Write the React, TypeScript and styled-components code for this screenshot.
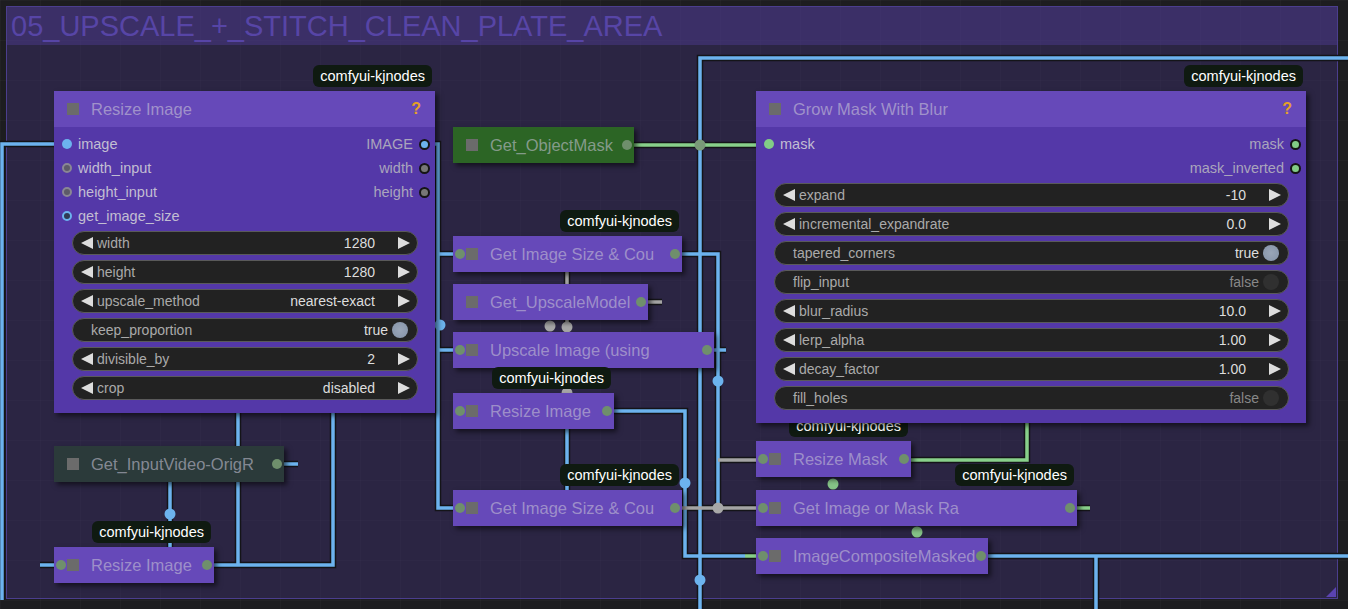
import React from "react";
import styled, { createGlobalStyle } from "styled-components";

const GlobalStyle = createGlobalStyle`
  html, body {
    margin: 0;
    padding: 0;
    background: #1d1d20;
    overflow: hidden;
  }
  body {
    font-family: "Liberation Sans", Arial, sans-serif;
  }
`;

const Canvas = styled.div`
  position: relative;
  width: 1348px;
  height: 609px;
  overflow: hidden;
  background-color: #1d1d20;
  background-image: linear-gradient(rgba(255, 255, 255, 0.025) 1px, transparent 1px),
    linear-gradient(90deg, rgba(255, 255, 255, 0.025) 1px, transparent 1px);
  background-size: 40px 40px;
`;

const Group = styled.div`
  position: absolute;
  left: 6px;
  top: 6px;
  width: 1330px;
  height: 591px;
  border: 1.5px solid #4b3e8e;
  background: rgba(62, 48, 110, 0.45);
  display: flex;
  flex-direction: column;
`;

const GroupHeader = styled.div`
  height: 38px;
  background: rgba(75, 58, 140, 0.5);
  color: #5745a6;
  font-size: 29px;
  line-height: 38px;
  padding-left: 4px;
  white-space: nowrap;
`;

const GroupResize = styled.div`
  position: absolute;
  right: 1px;
  bottom: 1px;
  width: 0;
  height: 0;
  border-left: 10px solid transparent;
  border-bottom: 10px solid #5a43b0;
`;

const Wires = styled.svg`
  position: absolute;
  left: 0;
  top: 0;
  width: 1348px;
  height: 609px;
  pointer-events: none;
`;

const NodeBox = styled.div<{ $x: number; $y: number; $w: number; $h: number; $bg: string }>`
  position: absolute;
  left: ${(p) => p.$x}px;
  top: ${(p) => p.$y}px;
  width: ${(p) => p.$w}px;
  height: ${(p) => p.$h}px;
  background: ${(p) => p.$bg};
  box-shadow: 3px 3px 5px rgba(0, 0, 0, 0.55);
  display: flex;
  flex-direction: column;
`;

const TitleBar = styled.div<{ $bg: string }>`
  height: 36px;
  flex: none;
  background: ${(p) => p.$bg};
  display: flex;
  align-items: center;
  padding: 0 14px 0 13px;
  gap: 12px;
  color: rgba(200, 196, 215, 0.6);
  font-size: 16.5px;
  white-space: nowrap;
  overflow: hidden;
`;

const CollapseBox = styled.span`
  width: 12px;
  height: 12px;
  flex: none;
  background: #6b6b6b;
`;

const TitleText = styled.span`
  flex: 1;
`;

const Help = styled.span`
  color: #e3a126;
  font-weight: bold;
  font-size: 16px;
`;

const Body = styled.div`
  flex: 1;
  padding: 5px 17px 0 8px;
  display: flex;
  flex-direction: column;
`;

const SlotRow = styled.div`
  height: 24px;
  display: flex;
  align-items: center;
  justify-content: space-between;
  font-size: 14.5px;
`;

const SlotSide = styled.div<{ $out?: boolean }>`
  display: flex;
  align-items: center;
  gap: 6px;
  flex-direction: ${(p) => (p.$out ? "row-reverse" : "row")};
  margin-right: ${(p) => (p.$out ? "-12px" : "0")};
  color: ${(p) => (p.$out ? "#aaa5bc" : "#c2bed2")};
`;

type Dot = "blue" | "blueRing" | "greyRing" | "grey" | "green";

const dotFill: Record<Dot, string> = {
  blue: "#6cb3ee",
  blueRing: "#2f3a52",
  greyRing: "#5d5a68",
  grey: "#777",
  green: "#82cc86",
};

const dotEdge: Record<Dot, string> = {
  blue: "#6cb3ee",
  blueRing: "#6cb3ee",
  greyRing: "#8a8794",
  grey: "#151515",
  green: "#151515",
};

const SlotDot = styled.span<{ $kind: Dot; $out?: boolean }>`
  width: ${(p) => (p.$out ? 11 : 10)}px;
  height: ${(p) => (p.$out ? 11 : 10)}px;
  border-radius: 50%;
  box-sizing: border-box;
  background: ${(p) => dotFill[p.$kind]};
  border: ${(p) => (p.$out || p.$kind.includes("Ring") ? 2 : 0)}px solid
    ${(p) => (p.$out && p.$kind === "blue" ? "#151515" : dotEdge[p.$kind])};
`;

const Widgets = styled.div`
  margin: 3px 0 0 10px;
  display: flex;
  flex-direction: column;
  gap: 5px;
`;

const Widget = styled.div`
  height: 24px;
  box-sizing: border-box;
  border: 1px solid #5a5a5a;
  border-radius: 12px;
  background: #222;
  display: flex;
  align-items: center;
  padding: 0 7px 0 8px;
  font-size: 14px;
  color: #aaa;
  white-space: nowrap;
`;

const Arrow = styled.span<{ $right?: boolean }>`
  width: 0;
  height: 0;
  flex: none;
  border-top: 6px solid transparent;
  border-bottom: 6px solid transparent;
  ${(p) => (p.$right ? "border-left: 12px solid #ddd;" : "border-right: 12px solid #ddd;")}
`;

const WLabel = styled.span<{ $toggle?: boolean }>`
  flex: 1;
  margin-left: ${(p) => (p.$toggle ? 10 : 4)}px;
`;

const WValue = styled.span<{ $toggle?: boolean; $on?: boolean }>`
  color: ${(p) => (p.$toggle && !p.$on ? "#888" : "#ddd")};
  margin-right: ${(p) => (p.$toggle ? 4 : 23)}px;
`;

const Knob = styled.span<{ $on: boolean }>`
  width: 16px;
  height: 16px;
  border-radius: 50%;
  margin-right: 2px;
  background: ${(p) => (p.$on ? "radial-gradient(circle, #9aa6b8 0%, #8493a8 100%)" : "#303030")};
`;

const CollapsedBox = styled(NodeBox)`
  flex-direction: row;
  align-items: center;
  padding: 0 10px 0 13px;
  gap: 12px;
  box-sizing: border-box;
  color: rgba(200, 196, 215, 0.58);
  font-size: 16.5px;
  white-space: nowrap;
`;

const EdgeDot = styled.span<{ $side: "left" | "right" }>`
  position: absolute;
  top: 13px;
  ${(p) => p.$side}: 2px;
  width: 10px;
  height: 10px;
  border-radius: 50%;
  background: #6f8f6c;
`;

const Badge = styled.div`
  position: absolute;
  right: 3px;
  bottom: calc(100% + 4px);
  height: 22px;
  padding: 0 7px;
  border-radius: 6px;
  background: #0f1a11;
  color: #fff;
  font-size: 14.5px;
  line-height: 22px;
  white-space: nowrap;
`;

type WidgetDef = { label: string; value: string; toggle?: boolean; on?: boolean };
type SlotDef = { name: string; dot: Dot };

type FullNode = {
  title: string;
  x: number;
  y: number;
  w: number;
  h: number;
  inputs: SlotDef[];
  outputs: SlotDef[];
  widgets: WidgetDef[];
};

type MiniNode = {
  title: string;
  x: number;
  y: number;
  w: number;
  bg?: string;
  input?: boolean;
  badge?: boolean;
};

const PURPLE = "#6649b9";

const resizeNode: FullNode = {
  title: "Resize Image",
  x: 54,
  y: 91,
  w: 381,
  h: 322,
  inputs: [
    { name: "image", dot: "blue" },
    { name: "width_input", dot: "greyRing" },
    { name: "height_input", dot: "greyRing" },
    { name: "get_image_size", dot: "blueRing" },
  ],
  outputs: [
    { name: "IMAGE", dot: "blue" },
    { name: "width", dot: "grey" },
    { name: "height", dot: "grey" },
  ],
  widgets: [
    { label: "width", value: "1280" },
    { label: "height", value: "1280" },
    { label: "upscale_method", value: "nearest-exact" },
    { label: "keep_proportion", value: "true", toggle: true, on: true },
    { label: "divisible_by", value: "2" },
    { label: "crop", value: "disabled" },
  ],
};

const growNode: FullNode = {
  title: "Grow Mask With Blur",
  x: 756,
  y: 91,
  w: 550,
  h: 332,
  inputs: [{ name: "mask", dot: "green" }],
  outputs: [
    { name: "mask", dot: "green" },
    { name: "mask_inverted", dot: "green" },
  ],
  widgets: [
    { label: "expand", value: "-10" },
    { label: "incremental_expandrate", value: "0.0" },
    { label: "tapered_corners", value: "true", toggle: true, on: true },
    { label: "flip_input", value: "false", toggle: true },
    { label: "blur_radius", value: "10.0" },
    { label: "lerp_alpha", value: "1.00" },
    { label: "decay_factor", value: "1.00" },
    { label: "fill_holes", value: "false", toggle: true },
  ],
};

// collapsed nodes, listed in paint order
const miniNodes: MiniNode[] = [
  { title: "Get_ObjectMask", x: 453, y: 127, w: 181, bg: "#2c6525" },
  { title: "Get Image Size & Cou", x: 453, y: 236, w: 229, input: true, badge: true },
  { title: "Get_UpscaleModel", x: 453, y: 284, w: 195 },
  { title: "Upscale Image (using", x: 453, y: 332, w: 261, input: true },
  { title: "Resize Image", x: 453, y: 393, w: 161, input: true, badge: true },
  { title: "Get Image Size & Cou", x: 453, y: 490, w: 229, input: true, badge: true },
  { title: "Get_InputVideo-OrigR", x: 54, y: 446, w: 230, bg: "#2b3a3a" },
  { title: "Resize Image", x: 54, y: 547, w: 160, input: true, badge: true },
  { title: "Resize Mask", x: 756, y: 441, w: 155, input: true, badge: true },
  { title: "Get Image or Mask Ra", x: 756, y: 490, w: 321, input: true, badge: true },
  { title: "ImageCompositeMasked", x: 756, y: 538, w: 232, input: true },
];

const BLUE = "#6cb3ee";
const GREEN = "#88d08a";
const GREY = "#a4a4a4";

const links: { d: string; color: string }[] = [
  { d: "M2 600 V144 H60", color: BLUE },
  { d: "M430 144 H438 V508 H459 M438 254 H459 M438 350 H459", color: BLUE },
  { d: "M700 609 V58 H1348", color: BLUE },
  { d: "M682 254 H718 V508", color: BLUE },
  { d: "M714 350 H726", color: BLUE },
  { d: "M614 411 H685 V556 H745", color: BLUE },
  { d: "M745 556 H762", color: GREEN },
  { d: "M988 556 H1348 M1096 556 V609", color: BLUE },
  { d: "M567 429 V490", color: BLUE },
  { d: "M208 565 H333 V413 M238 565 V413", color: BLUE },
  { d: "M40 565 H60", color: BLUE },
  { d: "M278 464 H298", color: BLUE },
  { d: "M170 482 V547", color: BLUE },
  { d: "M628 145 H762", color: GREEN },
  { d: "M905 460 H1027 V423", color: GREEN },
  { d: "M1071 508 H1090", color: GREEN },
  { d: "M682 508 H762 M718 460 H762", color: GREY },
  { d: "M567 272 V332", color: GREY },
  { d: "M648 302 H662", color: GREY },
];

const joints: { x: number; y: number; color: string }[] = [
  { x: 440, y: 325, color: BLUE },
  { x: 700, y: 145, color: "#7a9a78" },
  { x: 700, y: 580, color: BLUE },
  { x: 718, y: 381, color: BLUE },
  { x: 685, y: 483, color: BLUE },
  { x: 718, y: 508, color: "#a8a8a8" },
  { x: 170, y: 514, color: BLUE },
  { x: 550, y: 326, color: "#a8a8a8" },
  { x: 567, y: 327, color: "#a8a8a8" },
  { x: 833, y: 484, color: "#86c488" },
  { x: 917, y: 532, color: "#86c488" },
  { x: 567, y: 393, color: "#a8a8a8" },
];

const NodeWidget = ({ w }: { w: WidgetDef }) => (
  <Widget>
    {!w.toggle && <Arrow />}
    <WLabel $toggle={w.toggle}>{w.label}</WLabel>
    <WValue $toggle={w.toggle} $on={w.on}>
      {w.value}
    </WValue>
    {w.toggle ? <Knob $on={!!w.on} /> : <Arrow $right />}
  </Widget>
);

const FullNodeView = ({ node }: { node: FullNode }) => {
  const rows = Math.max(node.inputs.length, node.outputs.length);
  return (
    <NodeBox $x={node.x} $y={node.y} $w={node.w} $h={node.h} $bg="#5438a8">
      <Badge>comfyui-kjnodes</Badge>
      <TitleBar $bg={PURPLE}>
        <CollapseBox />
        <TitleText>{node.title}</TitleText>
        <Help>?</Help>
      </TitleBar>
      <Body>
        {Array.from({ length: rows }).map((_, i) => {
          const a = node.inputs[i];
          const b = node.outputs[i];
          return (
            <SlotRow key={i}>
              <SlotSide>
                {a && <SlotDot $kind={a.dot} />}
                {a && a.name}
              </SlotSide>
              <SlotSide $out>
                {b && <SlotDot $kind={b.dot} $out />}
                {b && b.name}
              </SlotSide>
            </SlotRow>
          );
        })}
        <Widgets>
          {node.widgets.map((w) => (
            <NodeWidget key={w.label} w={w} />
          ))}
        </Widgets>
      </Body>
    </NodeBox>
  );
};

const MiniNodeView = ({ node }: { node: MiniNode }) => (
  <CollapsedBox $x={node.x} $y={node.y} $w={node.w} $h={36} $bg={node.bg || PURPLE}>
    {node.badge && <Badge>comfyui-kjnodes</Badge>}
    {node.input && <EdgeDot $side="left" />}
    <CollapseBox />
    <span>{node.title}</span>
    <EdgeDot $side="right" />
  </CollapsedBox>
);

export default function App() {
  return (
    <Canvas>
      <GlobalStyle />
      <Group>
        <GroupHeader>05_UPSCALE_+_STITCH_CLEAN_PLATE_AREA</GroupHeader>
        <GroupResize />
      </Group>
      <Wires viewBox="0 0 1348 609">
        {links.map((l, i) => (
          <path key={"o" + i} d={l.d} fill="none" stroke="#141418" strokeWidth={6.5} />
        ))}
        {links.map((l, i) => (
          <path key={"c" + i} d={l.d} fill="none" stroke={l.color} strokeWidth={3.5} />
        ))}
        {joints.map((j, i) => (
          <circle key={i} cx={j.x} cy={j.y} r={5.5} fill={j.color} />
        ))}
      </Wires>
      {miniNodes.slice(0, 9).map((n, i) => (
        <MiniNodeView key={i} node={n} />
      ))}
      <FullNodeView node={resizeNode} />
      <FullNodeView node={growNode} />
      {miniNodes.slice(9).map((n, i) => (
        <MiniNodeView key={"b" + i} node={n} />
      ))}
    </Canvas>
  );
}
